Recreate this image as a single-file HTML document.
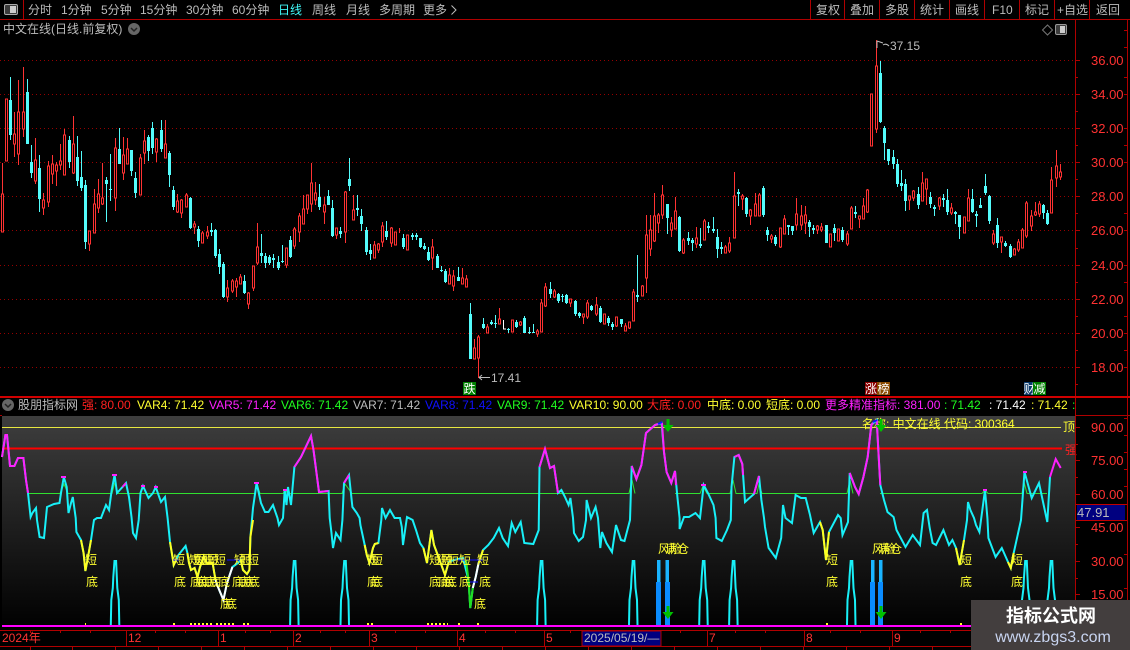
<!DOCTYPE html>
<html><head><meta charset="utf-8"><style>
html,body{margin:0;padding:0;background:#000;width:1130px;height:650px;overflow:hidden}
svg{display:block;position:absolute;left:0;top:0}
text{font-family:"Liberation Sans","Noto Sans CJK SC",sans-serif;font-size:12px;white-space:pre}
.g{fill:#bcbcbc}.a{fill:#ff3232;font-size:13px}.y{fill:#ffff30}.r{fill:#ff2020}.m{fill:#ff20ff}.n{fill:#20ff20}.b{fill:#1010ff}.w{fill:#fff}
</style></head><body>
<svg width="1130" height="650" viewBox="0 0 1130 650">
<defs>
<linearGradient id="pg" x1="0" y1="0" x2="0" y2="1"><stop offset="0" stop-color="#3e3e3e"/><stop offset="1" stop-color="#000"/></linearGradient>
<polyline id="sp" fill="none" stroke="#18f0f8" stroke-width="2" points="-4.500,625 -4,600 -2.500,588 -2,577 -.8,561 .8,561 1.500,577 2,588 3.500,600 4,625"/>
<path id="rb" d="M6.5 100V160M2.5 195V231M14.5 135V143M18.5 113V153M23.5 113V128M35.5 161V180M43.5 201V207M48.5 167V201M52.5 165V173M56.5 166V170M60.5 162V164M64.5 136V174M73.5 145V172M89.5 232V243M94.5 205V232M98.5 195V207M102.5 199V203M115.5 149V197M123.5 156V172M127.5 150V163M140.5 159V194M144.5 142V152M156.5 140V151M165.5 145V157M177.5 202V211M181.5 201V212M186.5 196V206M194.5 225V226M202.5 234V242M207.5 233V235M227.5 289V296M232.5 282V290M236.5 282V286M240.5 278V283M248.5 294V303M253.5 267V287M257.5 248V262M286.5 249V264M294.5 230V245M299.5 217V231M303.5 210V223M307.5 196V208M311.5 184V203M315.5 194V199M324.5 206V211M336.5 229V234M345.5 193V231M353.5 211V219M374.5 246V257M378.5 245V249M382.5 227V241M391.5 229V242M395.5 233V244M407.5 236V249M432.5 248V257M449.5 276V283M453.5 277V285M462.5 279V283M466.5 280V286M474.5 349V358M478.5 338V357M487.5 328V332M499.5 320V323M512.5 321V331M520.5 323V324M537.5 332V333M541.5 304V331M545.5 288V305M554.5 292V296M570.5 300V302M583.5 315V316M587.5 304V316M596.5 306V313M604.5 315V323M616.5 318V325M625.5 327V330M629.5 323V327M633.5 293V320M642.5 287V295M646.5 236V277M650.5 231V248M654.5 217V240M658.5 216V222M662.5 196V214M671.5 224V229M675.5 212V228M683.5 241V252M696.5 239V243M704.5 222V239M725.5 248V252M729.5 244V250M734.5 197V237M742.5 197V198M750.5 211V215M755.5 205V215M759.5 196V215M771.5 237V238M780.5 229V246M784.5 220V233M796.5 215V224M801.5 217V224M805.5 216V222M817.5 227V229M821.5 228V229M830.5 235V246M838.5 230V240M847.5 235V243M851.5 209V228M859.5 217V218M863.5 207V218M867.5 191V211M871.5 95V145M876.5 67V128M909.5 197V199M913.5 192V197M922.5 184V200M926.5 180V188M939.5 199V205M951.5 209V212M964.5 218V232M968.5 199V220M993.5 235V242M1001.5 238V241M1014.5 250V254M1018.5 243V249M1022.5 231V247M1026.5 204V235M1031.5 217V225M1035.5 213V214M1039.5 205V213M1051.5 181V212M1056.5 167V177M1060.5 173V176"/>
</defs>

<!-- grid -->
<path d="M0 60.5H1075M0 94.5H1075M0 128.5H1075M0 162.5H1075M0 196.5H1075M0 230.5H1075M0 265.5H1075M0 299.5H1075M0 333.5H1075M0 367.5H1075" stroke="#960000" stroke-width="1" stroke-dasharray="1 3" shape-rendering="crispEdges"/>

<!-- candles -->
<g fill="none" shape-rendering="crispEdges">
<path stroke="#ff3232" d="M2.5 163V231M14.5 112V157M18.5 80V165M23.5 67V137M35.5 138V184M43.5 193V215M48.5 161V207M52.5 155V184M56.5 162V186M60.5 144V170M64.5 129V174M73.5 116V174M89.5 232V251M94.5 189V232M98.5 179V213M102.5 163V205M115.5 138V211M123.5 137V180M127.5 138V164M140.5 154V194M144.5 130V164M156.5 138V162M165.5 120V158M177.5 194V213M181.5 199V218M186.5 193V207M194.5 221V234M202.5 231V243M207.5 226V239M227.5 280V302M232.5 279V293M236.5 278V297M240.5 274V284M248.5 292V309M253.5 267V291M257.5 223V265M286.5 249V268M294.5 227V249M299.5 213V242M303.5 195V224M307.5 196V214M311.5 163V212M315.5 182V205M324.5 197V224M336.5 228V239M345.5 191V243M353.5 195V219M374.5 241V257M378.5 243V253M382.5 222V247M391.5 227V247M399.5 228V233M407.5 236V249M432.5 239V270M449.5 268V284M453.5 270V291M462.5 268V283M466.5 275V286M474.5 339V358M478.5 335V378M487.5 324V332M499.5 308V324M520.5 321V326M537.5 329V337M541.5 299V331M545.5 283V307M554.5 289V298M570.5 299V307M583.5 314V324M587.5 300V319M596.5 297V316M604.5 314V324M616.5 317V327M625.5 323V331M629.5 322V329M633.5 289V320M642.5 285V295M646.5 215V293M650.5 215V256M654.5 193V242M658.5 213V233M662.5 185V219M671.5 217V237M675.5 197V228M683.5 238V254M696.5 227V248M704.5 219V239M725.5 245V252M729.5 237V253M734.5 172V238M742.5 194V210M750.5 209V225M755.5 193V215M759.5 193V215M771.5 234V243M780.5 229V248M784.5 215V233M796.5 198V230M801.5 205V230M805.5 206V234M817.5 225V234M821.5 223V232M847.5 231V246M851.5 206V228M859.5 218V228M863.5 198V218M867.5 189V213M876.5 40V133M909.5 196V210M913.5 190V201M922.5 172V200M926.5 180V205M939.5 197V210M951.5 203V215M964.5 218V233M968.5 189V221M993.5 230V245M1001.5 238V253M1014.5 248V255M1018.5 239V252M1022.5 228V248M1026.5 201V238M1031.5 210V231M1035.5 202V216M1039.5 201V217M1051.5 167V212M1056.5 150V187M1060.5 164V180"/>
<path stroke="#54fcfc" d="M10.5 77V140M27.5 79V144M31.5 145V178M39.5 155V212M69.5 136V168M77.5 136V186M81.5 151V191M85.5 180V249M106.5 177V222M110.5 154V201M119.5 128V164M131.5 150V176M135.5 172V198M148.5 135V161M152.5 122V154M161.5 120V152M169.5 151V187M173.5 186V210M190.5 197V229M198.5 226V247M211.5 223V236M215.5 229V258M219.5 249V274M223.5 262V298M244.5 275V294M261.5 234V263M265.5 253V268M269.5 255V265M273.5 254V268M278.5 256V270M282.5 245V263M290.5 236V258M319.5 184V210M328.5 190V205M332.5 200V237M340.5 227V238M349.5 158V191M357.5 195V216M361.5 209V231M366.5 227V255M370.5 244V260M386.5 221V240M403.5 234V249M412.5 233V240M416.5 233V240M420.5 238V248M424.5 243V250M428.5 247V261M437.5 254V268M441.5 266V272M445.5 269V283M458.5 267V281M470.5 303V359M483.5 318V329M491.5 320V325M495.5 315V328M508.5 328V333M516.5 320V328M524.5 316V333M529.5 327V334M533.5 324V333M550.5 282V298M558.5 293V303M562.5 294V302M566.5 294V304M575.5 300V316M579.5 312V318M591.5 305V311M600.5 306V323M608.5 316V326M612.5 322V330M621.5 319V327M637.5 255V302M667.5 204V234M679.5 216V252M688.5 232V245M692.5 238V251M700.5 228V248M708.5 222V233M713.5 217V233M717.5 229V258M721.5 242V254M738.5 189V206M746.5 197V217M763.5 186V217M767.5 227V241M775.5 235V246M788.5 225V235M792.5 226V235M809.5 220V237M813.5 225V234M826.5 225V243M834.5 224V241M842.5 227V242M855.5 206V218M880.5 61V123M884.5 126V160M888.5 149V165M893.5 150V169M897.5 159V187M901.5 170V191M905.5 179V211M918.5 187V209M930.5 192V208M934.5 205V216M943.5 194V207M947.5 189V215M955.5 211V224M959.5 215V239M972.5 189V213M976.5 211V227M980.5 198V208M985.5 174V195M989.5 195V224M997.5 218V248M1005.5 241V247M1010.5 244V258M1043.5 204V219M1047.5 210V225"/>
<path stroke="#fff" d="M503.5 320V329M503 329H506"/>
<g stroke="#ff3232" stroke-width="3" stroke-linecap="square"><use href="#rb"/></g>
<g stroke="#000" stroke-width="1" stroke-linecap="square"><use href="#rb"/></g>
<path stroke="#54fcfc" stroke-width="3" d="M10.5 100V135M27.5 92V144M31.5 162V173M39.5 168V199M69.5 140V162M77.5 157V181M81.5 177V188M85.5 185V242M106.5 180V184M110.5 189V190M119.5 149V164M131.5 150V171M135.5 178V193M148.5 137V151M152.5 128V148M161.5 130V149M169.5 153V175M173.5 190V207M190.5 198V228M198.5 229V241M211.5 230V232M215.5 230V256M219.5 254V267M223.5 264V297M244.5 281V293M261.5 253V256M265.5 256V263M269.5 257V263M273.5 258V260M278.5 262V268M282.5 261V262M290.5 240V257M319.5 197V207M328.5 196V205M332.5 208V236M340.5 231V234M349.5 179V186M357.5 208V210M361.5 216V224M366.5 230V252M370.5 250V254M386.5 231V237M403.5 238V247M412.5 235V237M416.5 235V237M420.5 238V247M424.5 246V249M428.5 252V260M437.5 256V268M441.5 270V271M445.5 271V282M458.5 277V281M470.5 314V359M483.5 324V328M491.5 322V324M495.5 323V324M508.5 329V330M516.5 322V327M524.5 318V333M529.5 332V333M533.5 332V333M550.5 289V294M558.5 294V301M562.5 296V297M566.5 295V303M575.5 301V314M579.5 313V316M591.5 306V310M600.5 308V322M608.5 318V323M612.5 324V327M621.5 319V324M637.5 295V297M667.5 204V218M679.5 217V251M688.5 238V241M692.5 240V243M700.5 244V246M708.5 226V228M713.5 229V231M717.5 237V249M721.5 247V249M738.5 192V194M746.5 198V214M763.5 188V215M767.5 230V235M775.5 237V244M788.5 225V227M792.5 226V231M809.5 222V227M813.5 228V230M826.5 225V243M834.5 228V233M842.5 230V240M855.5 212V214M880.5 73V122M884.5 128V143M888.5 149V161M893.5 157V164M897.5 164V184M901.5 183V186M905.5 184V201M918.5 194V205M930.5 197V204M934.5 207V209M943.5 198V200M947.5 200V212M955.5 212V214M959.5 215V227M972.5 199V212M976.5 214V216M980.5 205V208M985.5 186V193M989.5 196V221M997.5 225V243M1005.5 243V246M1010.5 246V257M1043.5 205V213M1047.5 213V224"/>
</g>

<!-- extreme price labels -->
<path d="M877 41V48M877 41L883 43M883 45Q886 43 889 46" stroke="#bcbcbc" fill="none"/>
<text x="890" y="50" class="g">37.15</text>
<path d="M479 377.5H490M479 377.5L482 375M479 377.5L482 380" stroke="#bcbcbc" fill="none"/>
<text x="491" y="382" class="g">17.41</text>

<!-- badges -->
<rect x="463" y="382" width="13" height="13" fill="#008000"/><text x="463.5" y="393" class="w">跌</text>
<rect x="865" y="382" width="12" height="13" fill="#880000"/><text x="865" y="393" class="w">涨</text>
<rect x="877" y="382" width="13" height="13" fill="#8a4a00"/><text x="877.5" y="393" class="w">榜</text>
<rect x="1024" y="382" width="10" height="13" fill="#0b3a6b"/><text x="1023.5" y="393" class="w">财</text>
<rect x="1033" y="382" width="13" height="13" fill="#008000"/><text x="1033.5" y="393" class="w">减</text>

<!-- indicator panel -->
<rect x="2" y="416" width="1073" height="214" fill="url(#pg)"/>
<path d="M2 427.5H1061" stroke="#e8e840" shape-rendering="crispEdges"/>
<path d="M2 448.5H1062" stroke="#ff0000" stroke-width="2" shape-rendering="crispEdges"/>
<path d="M28 493.5H60L64 484L68 493.5H112L115 482L118 493.5H255L257 484L260 493.5H283L285 490L288 493.5H342L345 484L352 493.5H540M540 493.5H629L632 480L635 493.5M675 493.5H700L703 486L707 493.5H730L733 480L736 493.5H757L759 484L762 493.5H847L850 480L853 493.5M880 493.5H982L985 490L988 493.5H1022L1024 482L1027 493.5H1047" fill="none" stroke="#30e030"/>
<text x="862" y="428" class="y">名称: 中文在线 代码: 300364</text>
<text x="1063" y="431" class="y">顶</text>
<text x="1065" y="454" class="r">强</text>

<!-- spikes -->
<use href="#sp" x="115.3"/><use href="#sp" x="294.6"/><use href="#sp" x="345"/><use href="#sp" x="541.6"/><use href="#sp" x="633.5"/><use href="#sp" x="703.7"/><use href="#sp" x="733.6"/><use href="#sp" x="851.5"/><use href="#sp" x="1026"/><use href="#sp" x="1051.5"/>
<g shape-rendering="crispEdges">
<rect x="657" y="560" width="3.5" height="22" fill="#1ab4ff"/><rect x="656" y="582" width="5" height="43" fill="#0a8cff"/>
<rect x="665.5" y="560" width="3.5" height="22" fill="#1ab4ff"/><rect x="665" y="582" width="5" height="43" fill="#0a8cff"/>
<rect x="871" y="560" width="3.5" height="22" fill="#1ab4ff"/><rect x="870" y="582" width="5" height="43" fill="#0a8cff"/>
<rect x="879" y="560" width="3.5" height="22" fill="#1ab4ff"/><rect x="878" y="582" width="5" height="43" fill="#0a8cff"/>
</g>

<!-- main curve -->
<polyline fill="none" stroke="#18f0f8" stroke-width="2" points="2,457 5.4,435 7,435 10,466 14.4,466 18,458 23.4,458 26,480 28,493 30.6,517 32.4,513 36,508 37,520 39.6,537 44,538 47,507 54,504 59.5,503 61,493 63.8,477 66.7,487 68.5,513 71,503 72.8,497 75.7,518 76.4,532 81,540 83.6,553 85.4,571 88,557 91,540 94,520 97,518 101,518 106,505 109,510 111.7,490 114.6,475 117,493 122.5,487 126,483 129,497 131.5,517 133,533 136,538 138.7,520 140.5,493 143,486 148.5,498 153,493 155.7,487 161,502 165,497 167.6,518 170,542 173,560 173.7,565 176.6,559 178.4,555 185.6,546 187.4,553 189,563 191,570 194.6,568 197.5,577 200,567 203.6,557 207,563 212.6,563 215.5,580 218,587 223.4,600 227,583 232.4,567 238,563 240.7,560 243,570 247,574 249.4,570 250.4,537 253,508 256.6,483 261,503 265,512 268.5,512 273,505 277.5,518 279,525 283,518 284.7,490 286.5,505 288,487 291,505 294.4,467 301,457 311,436 313.5,450 319,492 328.6,491 329.7,518 331.5,533 333,548 336,533 340.5,540 342.4,520 344,483 349,475 352.4,507 356.8,513 359.6,518 360.4,525 364.7,545 366.8,555 369.4,563 373,548 374.8,544 378.4,543 381.3,520 382,508 385.6,518 390,510 394.6,518 400,518 401.8,527 403,545 405.4,528 407,517 412.6,520 416,530 420,543 423.4,548 427,563 431.4,530 434,545 439.6,560 445,575 448.7,562 454,560 463,558 468.5,580 470.3,608 472.8,588 475.7,577 478.6,563 483,550 488.3,545 493.7,538 499,528 502.7,538 508,546 511.7,523 515.3,532 520.7,522 524.3,543 533.3,544 538.7,530 539.5,467 545,449 550,468 554,466 558,493 561.4,490 565,497 568.6,505 570.4,498 573,518 574,533 578.7,541 583,537 586,520 586.6,500 591,518 595.6,507 598,518 600.3,548 602,532 606.4,543 612,552 616,525 621,540 624.5,541 630,520 631.7,466 636.4,479 641.4,465 646,433 655,425 661.6,423 664,452 666.6,472 671.3,483 675,471 677.4,497 679.6,518 679.6,529 684,517 689,517 695.5,513 700,518 703.7,485 708.4,494 713.5,505 715.6,518 716.4,538 721.8,541 727,530 730.8,520 731.5,487 734.4,457 738.7,455 742.3,464 745,502 754,494 759,476 761.4,500 764,518 765,527 768.6,548 775.8,558 781.2,538 783,505 785.5,518 792,523 795.6,495 801,498 805.7,498 810,515 813.7,533 820,522 822.7,530 826,560 829,532 838,515 840.7,518 842.5,535 848,522 849.7,473 855,487 858.7,494 863.4,477 867.7,457 871.3,425 876.7,420 878.5,453 880.3,485 884,500 887.5,512 893.6,517 896.5,530 905.5,547 912.7,535 920,545 923.6,513 927,510 929.7,528 932.6,543 936,545 943.4,530 949,545 952.4,540 956,548 959.6,565 964,540 967,520 968,502 970.4,510 974,518 976,525 979.4,532 985,490 987.4,518 988.4,538 995.6,557 1001.8,548 1008,562 1010.8,568 1013.7,553 1021,520 1024.5,472 1031.7,498 1039,483 1047.3,522 1050,477"/>
<g fill="none" stroke="#ff20ff" stroke-width="2">
<polyline points="2,457 5.4,435 7,435 10,466 14.4,466 18,458 23.4,458 26,480 28,493"/>
<polyline points="294.4,467 301,457 311,436 313.5,450 319,492 328.6,491"/>
<polyline points="539.5,467 545,449 550,468 554,466 558,493"/>
<polyline points="631.7,466 636.4,479 641.4,465 646,433 655,425 658,424"/>
<polyline points="662,423 664,452 666.6,472 671.3,483 675,471 676,485"/>
<polyline points="734.4,457 738.7,455 742.3,464 743,475"/>
<polyline points="754,494 759,476"/>
<polyline points="849.7,473 855,487 858.7,494 863.4,477 867.7,457 871.3,425 873,423"/>
<polyline points="876.7,420 878.5,453 880.3,485"/>
<polyline points="1050,477 1055.7,459 1060.7,468"/>
<polyline points="344,483 349,475"/><polyline points="122.5,487 126,483"/>
<path d="M61 477H66M112 475H117M141 486H145M154 487H158M254 483H259M283 490H287M701 485H706M983 490H987M1023 472H1027"/>
</g>
<path d="M658 424L662 422" stroke="#1010ff" stroke-width="2"/><path d="M873 422L877 420" stroke="#1010ff" stroke-width="2"/>
<g fill="none" stroke="#ffff20" stroke-width="2">
<polyline points="81,540 83.6,553 85.4,571 88,557 91,540"/>
<polyline points="170,542 173,560 173.7,565 176.6,559"/>
<polyline points="187.4,553 189,563 191,570 194.6,568 197.5,577 200,567 203.6,557 207,563 212.6,563 215.5,580"/>
<polyline points="240.7,560 243,570 247,574 249.4,570 250.4,537 253,520"/>
<polyline points="364.7,545 366.8,555 369.4,563 373,548 374.8,544 378.4,543"/>
<polyline points="423.4,548 427,563 431.4,530 434,545 439.6,560 445,575 448.7,562"/>
<polyline points="478.6,563 483,550"/>
<polyline points="820,522 822.7,530 826,560 829,532"/>
<polyline points="956,548 959.6,565 964,540"/>
<polyline points="1008,562 1010.8,568 1013.7,553"/>
</g>
<polyline fill="none" stroke="#fff" stroke-width="2" points="215.5,580 218,587 223.4,600 227,583 232.4,567"/>
<polyline fill="none" stroke="#fff" stroke-width="2" points="472.8,588 475.7,577 478.6,563"/>
<polyline fill="none" stroke="#20e020" stroke-width="2" points="466,560 468.5,580 470.3,608 472.8,588"/>
<path d="M173 560H180M227 560H240M454 560H484M470 582H478" stroke="#1010ff" fill="none" shape-rendering="crispEdges"/>

<!-- arrows -->
<g fill="#00c000">
<path d="M666.5 419h3v6h4l-5.500 7-5.500-7h4z"/>
<path d="M879.5 419h3v6h4l-5.500 7-5.500-7h4z"/>
<path d="M666.500 606h3v6h4l-5.500 7-5.500-7h4z"/>
<path d="M879.500 606h3v6h4l-5.500 7-5.500-7h4z"/>
</g>

<!-- 短 / 底 labels -->
<text class="y" y="564" x="85 173 189 193 196 202 207 214 234 240 247 367 371 429 436 441 447 459 477 826 960 1011">短短短短短短短短短短短短短短短短短短短短短短</text>
<text class="y" y="586" x="86 174 190 195 198 204 209 218 232 238 243 248 367 371 429 438 442 445 459 479 826 960 1011">底底底底底底底底底底底底底底底底底底底底底底底</text>
<text class="y" y="608" x="220 225 474">底底底</text>
<text class="y" x="658" y="553">风险</text><text class="y" x="665" y="553">满仓</text>
<text class="y" x="872" y="553">风险</text><text class="y" x="878" y="553">满仓</text>

<!-- baseline -->
<path d="M85 624H86M173 624H175M190 624H212M216 624H236M243 624H250M367 624H373M427 624H448M458 624H460M477 624H479M826 624H828M960 624H962M1011 624H1013" stroke="#ffff20" stroke-width="2" stroke-dasharray="2 2"/>
<rect x="2" y="625" width="1073" height="2" fill="#ff00ff"/>

<!-- frame lines -->
<g stroke="#b00000" fill="none" shape-rendering="crispEdges">
<path d="M0 19.500H1130M23.500 0V19M810.500 0V19M844.500 0V19M879.500 0V19M914.500 0V19M949.500 0V19M984.500 0V19M1019.500 0V19M1054.500 0V19M1089.500 0V19"/>
<path d="M1075.500 20V650M1127.500 20V650"/>
<path d="M1075 60.500h5M1075 94.500h5M1075 128.500h5M1075 162.500h5M1075 196.500h5M1075 230.500h5M1075 265.500h5M1075 299.500h5M1075 333.500h5M1075 367.500h5M1075 77.500h3M1075 111.500h3M1075 145.500h3M1075 179.500h3M1075 213.500h3M1075 248.500h3M1075 282.500h3M1075 316.500h3M1075 350.500h3M1075 384.500h3"/>
<path d="M1075 427.500h5M1075 460.500h5M1075 494.500h5M1075 527.500h5M1075 561.500h5M1075 594.500h5M1075 444.500h3M1075 477.500h3M1075 544.500h3M1075 578.500h3M1075 611.500h3"/>
<path d="M1124 30.500h3M1124 47.500h3M1124 77.500h3M1124 94.500h3M1124 128.500h3M1124 145.500h3M1124 162.500h3M1124 213.500h3M1124 230.500h3M1124 265.500h3M1124 282.500h3M1124 316.500h3M1124 333.500h3M1124 350.500h3M1124 367.500h3M1124 418.500h3M1124 435.500h3M1124 452.500h3M1124 469.500h3M1124 486.500h3M1124 520.500h3M1124 554.500h3M1124 588.500h3"/>
<path d="M0 630.500H1075M0 646.500H1130M126.500 630V646M218.500 630V646M293.500 630V646M369.500 630V646M457.500 630V646M544.500 630V646M707.500 630V646M804.500 630V646M892.500 630V646"/>
<path d="M30.500 646V650M72.500 646V650M115.500 646V650M158.500 646V650M201.500 646V650M244.500 646V650M287.500 646V650M330.500 646V650M373.500 646V650M416.500 646V650M459.500 646V650M502.500 646V650M545.500 646V650M588.500 646V650M631.500 646V650M674.500 646V650M717.500 646V650M760.500 646V650M803.500 646V650M846.500 646V650M889.500 646V650M932.500 646V650"/>
<path d="M30.500 630V633M60.500 630V633M90.500 630V633M155.500 630V633M185.500 630V633M245.500 630V633M270.500 630V633M320.500 630V633M345.500 630V633M395.500 630V633M425.500 630V633M485.500 630V633M515.500 630V633M570.500 630V633M680.500 630V633M735.500 630V633M765.500 630V633M830.500 630V633M860.500 630V633M920.500 630V633M950.500 630V633"/>
</g>
<rect x="0" y="396" width="1130" height="2" fill="#d00000" shape-rendering="crispEdges"/>
<path d="M0 415.500H2M1075 415.500H1130" stroke="#b00000" shape-rendering="crispEdges"/>

<!-- toolbar -->
<rect x="4.500" y="4.500" width="13" height="10" rx="1.500" fill="#3c3c3c" stroke="#aaa"/><rect x="10" y="6" width="6" height="7" fill="#ccc"/>
<text class="g" y="14" x="28">分时</text><text class="g" y="14" x="61">1分钟</text><text class="g" y="14" x="101">5分钟</text><text class="g" y="14" x="140">15分钟</text><text class="g" y="14" x="186">30分钟</text><text class="g" y="14" x="232">60分钟</text>
<text y="14" x="278" fill="#40f8f8">日线</text><text class="g" y="14" x="312">周线</text><text class="g" y="14" x="346">月线</text><text class="g" y="14" x="379">多周期</text><text class="g" y="14" x="423">更多</text>
<path d="M451.500 5.500L456 10L451.500 14.500" fill="none" stroke="#bcbcbc"/>
<text class="g" y="14" x="816">复权</text><text class="g" y="14" x="850">叠加</text><text class="g" y="14" x="885">多股</text><text class="g" y="14" x="920">统计</text><text class="g" y="14" x="955">画线</text><text class="g" y="14" x="992">F10</text><text class="g" y="14" x="1025">标记</text><text class="g" y="14" x="1057">+自选</text><text class="g" y="14" x="1096">返回</text>

<text class="g" x="3" y="33">中文在线(日线.前复权)</text>
<circle cx="134" cy="29" r="6" fill="#666"/><path d="M131 28L134 31L137 28" fill="none" stroke="#222" stroke-width="1.500"/>
<path d="M1047.500 25L1052.500 30L1047.500 35L1042.500 30Z" fill="none" stroke="#777"/>
<rect x="1055.500" y="24.500" width="11" height="10" rx="1.500" fill="#3c3c3c" stroke="#999"/><rect x="1060" y="26" width="5" height="7" fill="#ccc"/>

<!-- axis labels -->
<text class="a" x="1091" y="65">36.00</text><text class="a" x="1091" y="99">34.00</text><text class="a" x="1091" y="133">32.00</text><text class="a" x="1091" y="167">30.00</text><text class="a" x="1091" y="201">28.00</text><text class="a" x="1091" y="235">26.00</text><text class="a" x="1091" y="270">24.00</text><text class="a" x="1091" y="304">22.00</text><text class="a" x="1091" y="338">20.00</text><text class="a" x="1091" y="372">18.00</text>
<text class="a" x="1091" y="432">90.00</text><text class="a" x="1091" y="465">75.00</text><text class="a" x="1091" y="499">60.00</text><text class="a" x="1091" y="532">45.00</text><text class="a" x="1091" y="566">30.00</text><text class="a" x="1091" y="599">15.00</text>
<rect x="1077" y="505" width="48" height="15" fill="#000080"/><path d="M1076 504.500H1127M1076 520.500H1127" stroke="#c00000" shape-rendering="crispEdges"/>
<text class="g" x="1077" y="517" style="font-size:13px">47.91</text>

<!-- indicator header -->
<circle cx="8" cy="405" r="6" fill="#666"/><path d="M5 404L8 407L11 404" fill="none" stroke="#222" stroke-width="1.500"/>
<text class="g" x="18" y="409">股朋指标网</text>
<text class="r" x="82" y="409">强: 80.00</text>
<text class="y" x="137" y="409">VAR4: 71.42</text>
<text class="m" x="209" y="409">VAR5: 71.42</text>
<text class="n" x="281" y="409">VAR6: 71.42</text>
<text class="g" x="353" y="409">VAR7: 71.42</text>
<text class="b" x="425" y="409">VAR8: 71.42</text>
<text class="n" x="497" y="409">VAR9: 71.42</text>
<text class="y" x="569" y="409">VAR10: 90.00</text>
<text class="r" x="647" y="409">大底: 0.00</text>
<text class="y" x="707" y="409">中底: 0.00</text>
<text class="y" x="766" y="409">短底: 0.00</text>
<text class="m" x="825" y="409">更多精准指标: 381.00</text>
<text class="n" x="944" y="409">: 71.42</text>
<text class="w" x="989" y="409">: 71.42</text>
<text class="y" x="1031" y="409">: 71.42</text>
<text class="n" x="1072" y="409">:</text>

<!-- date axis -->
<g>
<text class="a" x="2" y="642" style="font-size:12px">2024年</text><text class="a" x="128" y="642" style="font-size:12px">12</text><text class="a" x="220" y="642" style="font-size:12px">1</text><text class="a" x="295" y="642" style="font-size:12px">2</text><text class="a" x="371" y="642" style="font-size:12px">3</text><text class="a" x="459" y="642" style="font-size:12px">4</text><text class="a" x="546" y="642" style="font-size:12px">5</text><text class="a" x="709" y="642" style="font-size:12px">7</text><text class="a" x="806" y="642" style="font-size:12px">8</text><text class="a" x="894" y="642" style="font-size:12px">9</text>
</g>
<rect x="582" y="631" width="79" height="15" fill="#000080" stroke="#b00000"/>
<text class="g" x="584" y="642">2025/05/19/—</text>

<!-- watermark -->
<rect x="971" y="600" width="159" height="50" fill="#433e3e"/>
<text x="1051" y="622" text-anchor="middle" style="font-size:18px;font-weight:bold" fill="#fff">指标公式网</text>
<text x="1053" y="642" text-anchor="middle" style="font-size:16px" fill="#c8d4f0">www.zbgs3.com</text>
</svg>
</body></html>
